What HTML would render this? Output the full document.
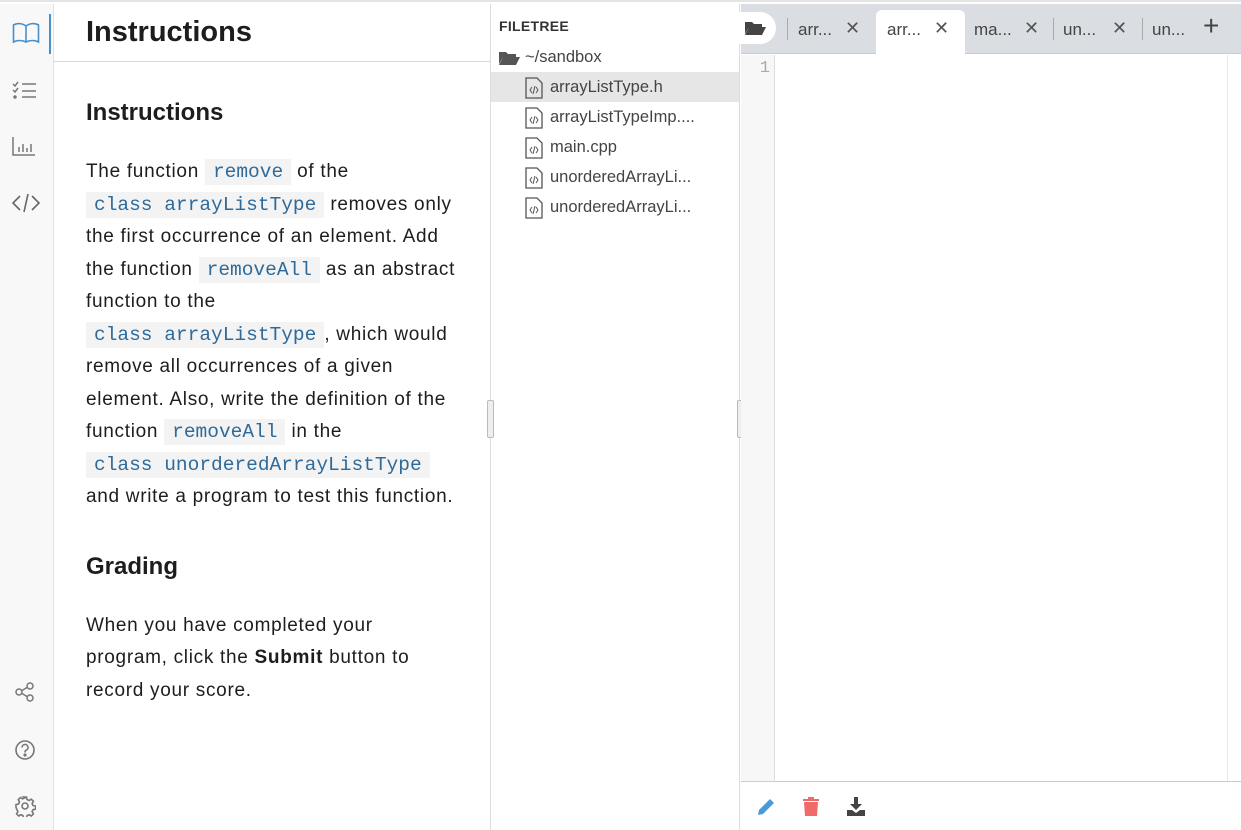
<!DOCTYPE html>
<html><head><meta charset="utf-8"><style>
*{box-sizing:border-box;margin:0;padding:0}
body{width:1241px;height:830px;overflow:hidden;background:#fff;font-family:"Liberation Sans",sans-serif;position:relative;border-top:2px solid #e4e4e4}
.side{position:absolute;left:0;top:2px;width:54px;bottom:0;background:#f8f8f8;border-right:1px solid #e0e0e0}
.side svg{position:absolute;left:12px}
.inst{position:absolute;left:54px;top:2px;width:437px;bottom:0;border-right:1px solid #ddd}
.hdr{height:58px;border-bottom:1px solid #d8d8d8;padding-left:32px;font-size:29px;font-weight:bold;color:#1d1d1d;line-height:56px}
.body{padding:0 0 0 32px;color:#1d1d1d;white-space:nowrap}
h2{font-size:24px;margin-top:36px;line-height:30px}
p{font-size:19px;line-height:32.5px;margin-top:28px;letter-spacing:.7px}
code{font-family:"Liberation Mono",monospace;background:#f3f3f3;color:#2e6a9a;padding:2px 8px;font-size:19.5px;letter-spacing:0}
.ft{position:absolute;left:491px;top:2px;width:249px;bottom:0;border-right:1px solid #ddd}
.ft .t{font-size:14px;font-weight:bold;color:#333;padding:14px 0 0 8px;letter-spacing:.3px}
.row{height:30px;line-height:30px;font-size:16.5px;color:#444;position:relative;padding-left:59px}
.row svg{position:absolute;left:34px;top:5px}
.sel{background:#e6e6e6}
.ed{position:absolute;left:741px;top:2px;right:0;bottom:0}
.tabs{height:50px;background:#dadde2;border-bottom:1px solid #ccc;position:relative}
.tab{position:absolute;top:6px;height:44px;line-height:40px;font-size:17px;color:#444}
.x{position:absolute;font-size:18px;color:#555}
.gut{position:absolute;left:0;top:51px;width:34px;bottom:49px;background:#f7f7f7;border-right:1px solid #ddd;color:#aaa;font-family:"Liberation Mono",monospace;font-size:17px;text-align:right;padding:4px 4px 0 0}
.sb{position:absolute;right:0;top:51px;width:14px;bottom:49px;border-left:1px solid #e8e8e8}
.bot{position:absolute;left:0;right:0;bottom:0;height:49px;border-top:1px solid #ccc}
</style></head><body>
<div class="side">
<svg style="top:18px" width="28" height="22" viewBox="0 0 28 22" fill="none" stroke="#4a90c8" stroke-width="1.6"><path d="M14 4C10 1 5 1 1.5 3V20C5 18 10 18 14 20 18 18 23 18 26.5 20V3C23 1 18 1 14 4ZM14 4V20"/></svg>
<div style="position:absolute;left:49px;top:10px;width:2px;height:40px;background:#4a90c8"></div>
<svg style="top:76px" width="26" height="20" fill="none" stroke="#777" stroke-width="1.5"><path d="M1 4l2 2 3-4M1 10l2 2 3-4M10 4h14M10 11h14M10 17h14"/><circle cx="3" cy="17" r="1" fill="#777"/></svg>
<svg style="top:132px" width="24" height="20" fill="none" stroke="#777" stroke-width="1.5"><path d="M1 1v18h22M7 16v-5M11 16v-8M15 16v-4M19 16v-8"/></svg>
<svg style="top:188px" width="28" height="22" fill="none" stroke="#666" stroke-width="1.6"><path d="M8 4L1 11l7 7M20 4l7 7-7 7M16 2l-4 18"/></svg>
<svg style="top:678px;left:15px" width="20" height="20" fill="none" stroke="#777" stroke-width="1.5"><circle cx="4" cy="10" r="3"/><circle cx="15" cy="4" r="3"/><circle cx="15" cy="16" r="3"/><path d="M7 8.5l5-3M7 11.5l5 3"/></svg>
<svg style="top:735px;left:14px" width="22" height="22" fill="none" stroke="#777" stroke-width="1.6"><circle cx="11" cy="11" r="9"/><path d="M8 8.5a3 3 0 1 1 4 2.8c-1 .4-1 1-1 2.2"/><circle cx="11" cy="16" r=".8" fill="#777"/></svg>
<svg style="top:791px;left:14px" width="22" height="22" fill="none" stroke="#777" stroke-width="1.6"><circle cx="11" cy="11" r="3"/><path d="M9.5 2h3l.5 2.5 2 1 2.3-1.3 2.1 2.1-1.3 2.3 1 2 2.5.5v3l-2.5.5-1 2 1.3 2.3-2.1 2.1-2.3-1.3-2 1-.5 2.5h-3l-.5-2.5-2-1-2.3 1.3-2.1-2.1 1.3-2.3-1-2L2 12.5v-3l2.5-.5 1-2-1.3-2.3 2.1-2.1 2.3 1.3 2-1z"/></svg>
</div>
<div class="inst">
<div class="hdr">Instructions</div>
<div class="body">
<h2>Instructions</h2>
<p>The function <code>remove</code> of the<br><code>class arrayListType</code> removes only<br>the first occurrence of an element. Add<br>the function <code>removeAll</code> as an abstract<br>function to the<br><code>class arrayListType</code>, which would<br>remove all occurrences of a given<br>element. Also, write the definition of the<br>function <code>removeAll</code> in the<br><code>class unorderedArrayListType</code><br>and write a program to test this function.</p>
<h2 style="margin-top:38px">Grading</h2>
<p style="margin-top:28px">When you have completed your<br>program, click the <b>Submit</b> button to<br>record your score.</p>
</div></div>
<div style="position:absolute;left:487px;top:398px;width:7px;height:38px;border:1px solid #bbb;background:#eee;border-radius:2px"></div>
<div class="ft">
<div class="t">FILETREE</div>
<div class="row" style="padding-left:34px;margin-top:8px"><svg style="left:8px;top:8px" width="21" height="15"><path d="M0 2h7l2 2h8v3H4L0 14z M4 7h17l-4 8H0z" fill="#555"/></svg>~/sandbox</div>
<div class="row sel"><svg width="18" height="22" fill="none" stroke="#555" stroke-width="1.3"><path d="M1 1h11l5 5v15H1z"/><path d="M7 10l-2 3 2 3M11 10l2 3-2 3M10 9l-2 8" stroke-width="1"/></svg>arrayListType.h</div>
<div class="row"><svg width="18" height="22" fill="none" stroke="#555" stroke-width="1.3"><path d="M1 1h11l5 5v15H1z"/><path d="M7 10l-2 3 2 3M11 10l2 3-2 3M10 9l-2 8" stroke-width="1"/></svg>arrayListTypeImp....</div>
<div class="row"><svg width="18" height="22" fill="none" stroke="#555" stroke-width="1.3"><path d="M1 1h11l5 5v15H1z"/><path d="M7 10l-2 3 2 3M11 10l2 3-2 3M10 9l-2 8" stroke-width="1"/></svg>main.cpp</div>
<div class="row"><svg width="18" height="22" fill="none" stroke="#555" stroke-width="1.3"><path d="M1 1h11l5 5v15H1z"/><path d="M7 10l-2 3 2 3M11 10l2 3-2 3M10 9l-2 8" stroke-width="1"/></svg>unorderedArrayLi...</div>
<div class="row"><svg width="18" height="22" fill="none" stroke="#555" stroke-width="1.3"><path d="M1 1h11l5 5v15H1z"/><path d="M7 10l-2 3 2 3M11 10l2 3-2 3M10 9l-2 8" stroke-width="1"/></svg>unorderedArrayLi...</div>
</div>
<div style="position:absolute;left:737px;top:398px;width:7px;height:38px;border:1px solid #bbb;background:#eee;border-radius:2px"></div>
<div class="ed">
<div class="tabs">
<div style="position:absolute;left:-10px;top:8px;width:45px;height:32px;background:#fff;border-radius:0 16px 16px 0"></div>
<svg style="position:absolute;left:4px;top:16px" width="21" height="15"><path d="M0 2h7l2 2h8v3H4L0 14z M4 7h17l-4 8H0z" fill="#444"/></svg>
<div style="position:absolute;left:46px;top:14px;width:1px;height:22px;background:#aaa"></div>
<div class="tab" style="left:57px">arr...</div><div class="x" style="left:104px;top:14px">✕</div>
<div class="tab" style="left:135px;width:89px;background:#fff;border-radius:6px 6px 0 0;padding-left:11px;height:45px">arr...</div><div class="x" style="left:193px;top:14px">✕</div>
<div class="tab" style="left:233px">ma...</div><div class="x" style="left:283px;top:14px">✕</div>
<div style="position:absolute;left:312px;top:14px;width:1px;height:22px;background:#aaa"></div>
<div class="tab" style="left:322px">un...</div><div class="x" style="left:371px;top:14px">✕</div>
<div style="position:absolute;left:401px;top:14px;width:1px;height:22px;background:#aaa"></div>
<div class="tab" style="left:411px">un...</div><div style="position:absolute;left:462px;top:6px;font-size:28px;color:#444">+</div>
</div>
<div class="gut">1</div>
<div class="sb"></div>
<div class="bot">
<svg style="position:absolute;left:16px;top:16px" width="18" height="18"><path d="M1 17l1-5L13 1l4 4L6 16z" fill="#4a9ad8"/></svg>
<svg style="position:absolute;left:62px;top:15px" width="16" height="19"><path d="M0 2h16v2H0zM5 0h6v2H5zM1 5h14l-1 14H2z" fill="#f06a6a"/></svg>
<svg style="position:absolute;left:106px;top:15px" width="18" height="19"><path d="M7 0h4v7h4l-6 6-6-6h4zM0 13h5l4 3 4-3h5v6H0z" fill="#444"/></svg>
</div>
</div>
</body></html>
